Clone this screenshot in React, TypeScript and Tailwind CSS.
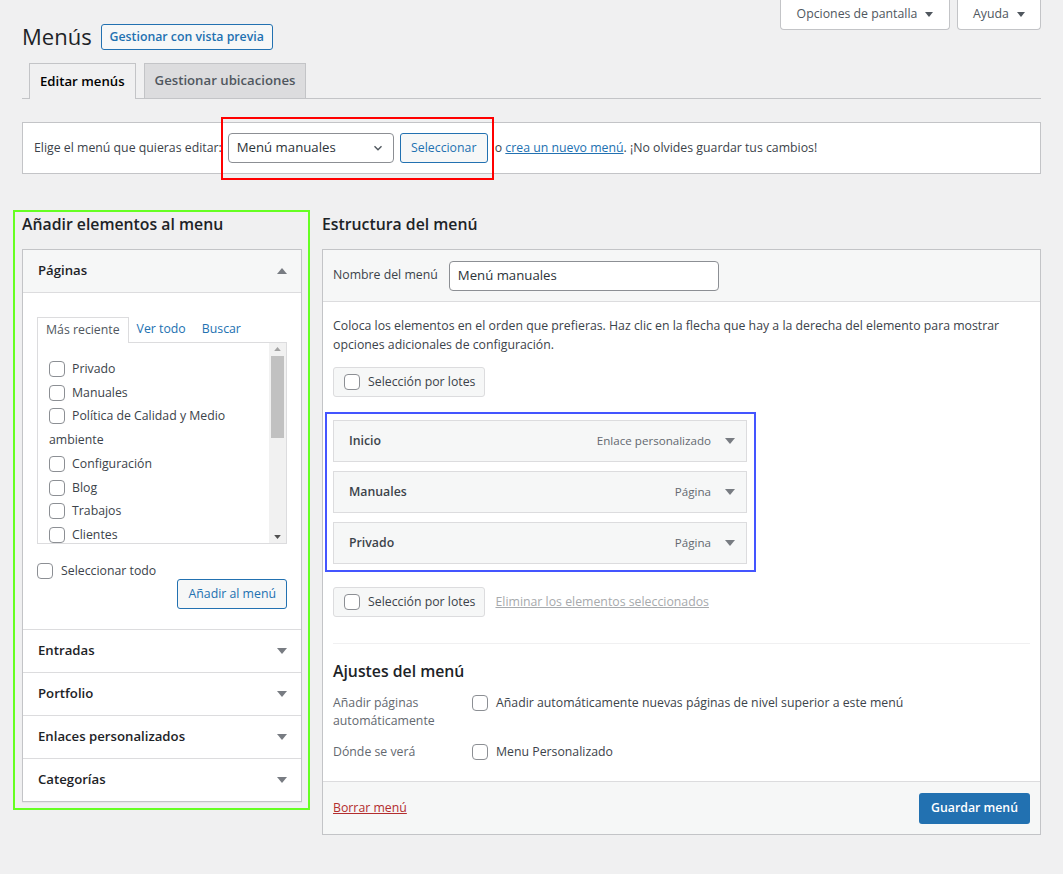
import type { ReactNode } from 'react'

const font = { fontFamily: '"Open Sans", "Noto Sans", Arial, sans-serif' }

function Tri({ up = false, className = '' }: { up?: boolean; className?: string }) {
  return (
    <svg width="10" height="6" viewBox="0 0 10 6" className={className}>
      {up ? <path d="M0 6 L5 0 L10 6 Z" fill="currentColor" /> : <path d="M0 0 L10 0 L5 6 Z" fill="currentColor" />}
    </svg>
  )
}

function Box() {
  return <span className="inline-block h-4 w-4 shrink-0 rounded-[4px] border border-[#8c8f94] bg-white align-[-4px]" />
}

function Section({ title, children, open = false }: { title: string; children?: ReactNode; open?: boolean }) {
  return (
    <div className="border-t border-[#dcdcde] first:border-t-0">
      <div className={`flex h-[42px] items-center justify-between pl-[15px] pr-[14px] ${open ? 'h-[43px] border-b border-[#dcdcde] bg-[#f6f7f7]' : 'bg-white'}`}>
        <span className="text-[13.2px] font-semibold text-[#1d2327]">{title}</span>
        <Tri up={open} className="text-[#787c82]" />
      </div>
      {children}
    </div>
  )
}

const pages = ['Privado', 'Manuales', 'Política de Calidad y Medio ambiente', 'Configuración', 'Blog', 'Trabajos', 'Clientes']

function MenuItem({ name, type }: { name: string; type: string }) {
  return (
    <div className="flex h-[42px] items-center justify-between border border-[#dcdcde] bg-[#f6f7f7] pl-[15px] pr-[11px]">
      <span className="text-[12.3px] font-semibold text-[#3c434a]">{name}</span>
      <span className="flex items-center gap-[14px] text-[11.6px] text-[#646970]">
        {type}
        <Tri className="text-[#787c82]" />
      </span>
    </div>
  )
}

function BulkButton() {
  return (
    <div className="flex h-[30px] items-center gap-[8px] whitespace-nowrap rounded-[3px] border border-[#dcdcde] bg-[#f6f7f7] pl-[10px] pr-[9px] text-[12.3px] text-[#3c434a]">
      <Box />
      Selección por lotes
    </div>
  )
}

export default function App() {
  return (
    <div className="min-h-[874px] w-full bg-[#f0f0f1] text-[12.3px] text-[#3c434a]" style={font}>
      <div className="flex justify-end gap-[7px] pr-[22px]">
        <div className="flex h-[30px] w-[170px] items-center justify-center gap-[8px] rounded-b-[4px] border border-t-0 border-[#c3c4c7] bg-white text-[12.3px] text-[#50575e]">
          Opciones de pantalla <Tri className="h-[5px] w-[8px] text-[#50575e]" />
        </div>
        <div className="flex h-[30px] w-[84px] items-center justify-center gap-[8px] rounded-b-[4px] border border-t-0 border-[#c3c4c7] bg-white text-[12.3px] text-[#50575e]">
          Ayuda <Tri className="h-[5px] w-[8px] text-[#50575e]" />
        </div>
      </div>

      <div className="px-[22px]">
        <div className="-mt-[8px] flex items-center gap-[9px]">
          <h1 className="text-[22px] leading-[29px] text-[#1d2327]">Menús</h1>
          <span className="mt-[1px] flex h-[26px] items-center rounded-[3px] border border-[#2271b1] bg-[#f6f7f7] px-[8px] text-[12.3px] font-semibold text-[#2271b1]">
            Gestionar con vista previa
          </span>
        </div>

        <div className="mt-[12px] flex gap-[8px] border-b border-[#c3c4c7] pl-[7px]">
          <div className="-mb-px flex h-[36px] items-center border border-b-0 border-[#c3c4c7] bg-[#f0f0f1] px-[10px] text-[13.2px] font-semibold text-[#000]">
            Editar menús
          </div>
          <div className="flex h-[35px] items-center border border-b-0 border-[#c3c4c7] bg-[#dcdcde] px-[10px] text-[13.2px] font-semibold text-[#50575e]">
            Gestionar ubicaciones
          </div>
        </div>

        <div className="relative mt-[23px] flex h-[52px] items-center border border-[#c3c4c7] bg-white pl-[11px] text-[12.3px] text-[#3c434a]">
          <span>Elige el menú que quieras editar:</span>
          <div className="ml-[6px] flex h-[30px] w-[166px] items-center justify-between rounded-[4px] border border-[#8c8f94] bg-white pl-[8px] pr-[8px] text-[13.2px] text-[#2c3338]">
            Menú manuales
            <svg width="14" height="14" viewBox="0 0 20 20"><path d="M5 7.5 L10 12.5 L15 7.5" fill="none" stroke="#50575e" strokeWidth="2" /></svg>
          </div>
          <span className="ml-[6px] flex h-[30px] w-[88px] items-center justify-center rounded-[3px] border border-[#2271b1] bg-[#f6f7f7] text-[12.3px] text-[#2271b1]">
            Seleccionar
          </span>
          <span className="ml-[7px]">
            o <span className="text-[#2271b1] underline">crea un nuevo menú</span>. ¡No olvides guardar tus cambios!
          </span>
          <div className="pointer-events-none absolute left-[198px] top-[-6px] h-[63px] w-[273px] border-2 border-[#ff0000]" />
        </div>

        <div className="mt-[38px] flex items-start gap-[20px]">
          <div className="relative w-[280px] shrink-0">
            <div className="pointer-events-none absolute -left-[9px] -right-[8px] -top-[2px] bottom-[-8px] border-2 border-[#66ff22]" />
            <h2 className="h-[37px] pt-[1px] text-[15.8px] font-semibold leading-[22px] text-[#1d2327]">Añadir elementos al menu</h2>
            <div className="border border-[#c3c4c7] bg-white shadow-[0_1px_1px_rgba(0,0,0,0.04)]">
              <Section title="Páginas" open>
                <div className="px-[14px] pb-[20px] pt-[24px]">
                  <div className="flex items-end">
                    <span className="-mb-px flex h-[26px] items-center border border-b-0 border-[#dcdcde] bg-white px-[8px] text-[12.3px] text-[#50575e]">
                      Más reciente
                    </span>
                    <span className="flex h-[25px] items-center px-[8px] text-[12.3px] text-[#2271b1]">Ver todo</span>
                    <span className="flex h-[25px] items-center px-[8px] text-[12.3px] text-[#2271b1]">Buscar</span>
                  </div>
                  <div className="flex h-[202px] border border-[#dcdcde] bg-white">
                    <div className="flex-1 overflow-hidden pl-[11px] pr-[4px] pt-[14px] text-[12.3px] leading-[23.7px] text-[#3c434a]">
                      {pages.map((p) => (
                        <div key={p}>
                          <Box />
                          <span className="ml-[7px]">{p}</span>
                        </div>
                      ))}
                    </div>
                    <div className="flex w-[17px] flex-col items-center bg-[#f1f1f1] py-[4px]">
                      <Tri up className="h-[4px] w-[7px] text-[#a3a3a3]" />
                      <div className="mt-[5px] h-[82px] w-[13px] bg-[#c1c1c1]" />
                      <div className="flex-1" />
                      <Tri className="h-[4px] w-[7px] text-[#505050]" />
                    </div>
                  </div>
                  <div className="mt-[19px] flex h-4 items-center gap-[8px] text-[12.3px] text-[#3c434a]">
                    <Box />
                    Seleccionar todo
                  </div>
                  <div className="flex justify-end">
                    <span className="flex h-[30px] items-center rounded-[3px] border border-[#2271b1] bg-[#f6f7f7] px-[10px] text-[12.3px] text-[#2271b1]">
                      Añadir al menú
                    </span>
                  </div>
                </div>
              </Section>
              <Section title="Entradas" />
              <Section title="Portfolio" />
              <Section title="Enlaces personalizados" />
              <Section title="Categorías" />
            </div>
          </div>

          <div className="min-w-0 flex-1">
            <h2 className="h-[37px] pt-[1px] text-[15.8px] font-semibold leading-[22px] text-[#1d2327]">Estructura del menú</h2>
            <div className="border border-[#c3c4c7] bg-white">
              <div className="flex h-[52px] items-center gap-[11px] border-b border-[#dcdcde] bg-[#f6f7f7] px-[10px]">
                <span className="text-[12.3px] text-[#3c434a]">Nombre del menú</span>
                <div className="flex h-[30px] w-[270px] items-center rounded-[4px] border border-[#8c8f94] bg-white px-[8px] text-[13.2px] text-[#2c3338]">
                  Menú manuales
                </div>
              </div>
              <div className="px-[10px] pt-[14px]">
                <p className="text-[12.3px] leading-[19px] text-[#3c434a]">
                  Coloca los elementos en el orden que prefieras. Haz clic en la flecha que hay a la derecha del elemento para mostrar opciones adicionales de configuración.
                </p>
                <div className="mt-[13px] flex">
                  <BulkButton />
                </div>
                <div className="relative mt-[23px] flex w-[414px] flex-col gap-[9px]">
                  <div className="pointer-events-none absolute -left-[8px] -right-[9px] -top-[8px] -bottom-[8px] border-2 border-[#4455ff]" />
                  <MenuItem name="Inicio" type="Enlace personalizado" />
                  <MenuItem name="Manuales" type="Página" />
                  <MenuItem name="Privado" type="Página" />
                </div>
                <div className="mt-[23px] flex items-center gap-[10px]">
                  <BulkButton />
                  <span className="text-[12.3px] text-[#a7aaad] underline">Eliminar los elementos seleccionados</span>
                </div>
                <div className="mt-[26px] border-t border-[#f0f0f1]" />
                <h3 className="mt-[16px] text-[15.8px] font-semibold leading-[22px] text-[#1d2327]">Ajustes del menú</h3>
                <div className="mt-[12px] flex">
                  <span className="w-[139px] text-[12.3px] leading-[18px] text-[#646970]">Añadir páginas automáticamente</span>
                  <span className="flex h-[18px] items-center gap-[8px] text-[12.3px] text-[#3c434a]">
                    <Box />
                    Añadir automáticamente nuevas páginas de nivel superior a este menú
                  </span>
                </div>
                <div className="mt-[13px] flex pb-[20px]">
                  <span className="w-[139px] text-[12.3px] leading-[18px] text-[#646970]">Dónde se verá</span>
                  <span className="flex h-[18px] items-center gap-[8px] text-[12.3px] text-[#3c434a]">
                    <Box />
                    Menu Personalizado
                  </span>
                </div>
              </div>
              <div className="flex h-[53px] items-center justify-between border-t border-[#dcdcde] bg-[#f6f7f7] px-[10px]">
                <span className="text-[12.3px] text-[#b32d2e] underline">Borrar menú</span>
                <span className="flex h-[31px] items-center rounded-[3px] bg-[#2271b1] px-[12px] text-[12.3px] font-semibold text-white">
                  Guardar menú
                </span>
              </div>
            </div>
          </div>
        </div>
      </div>
    </div>
  )
}
